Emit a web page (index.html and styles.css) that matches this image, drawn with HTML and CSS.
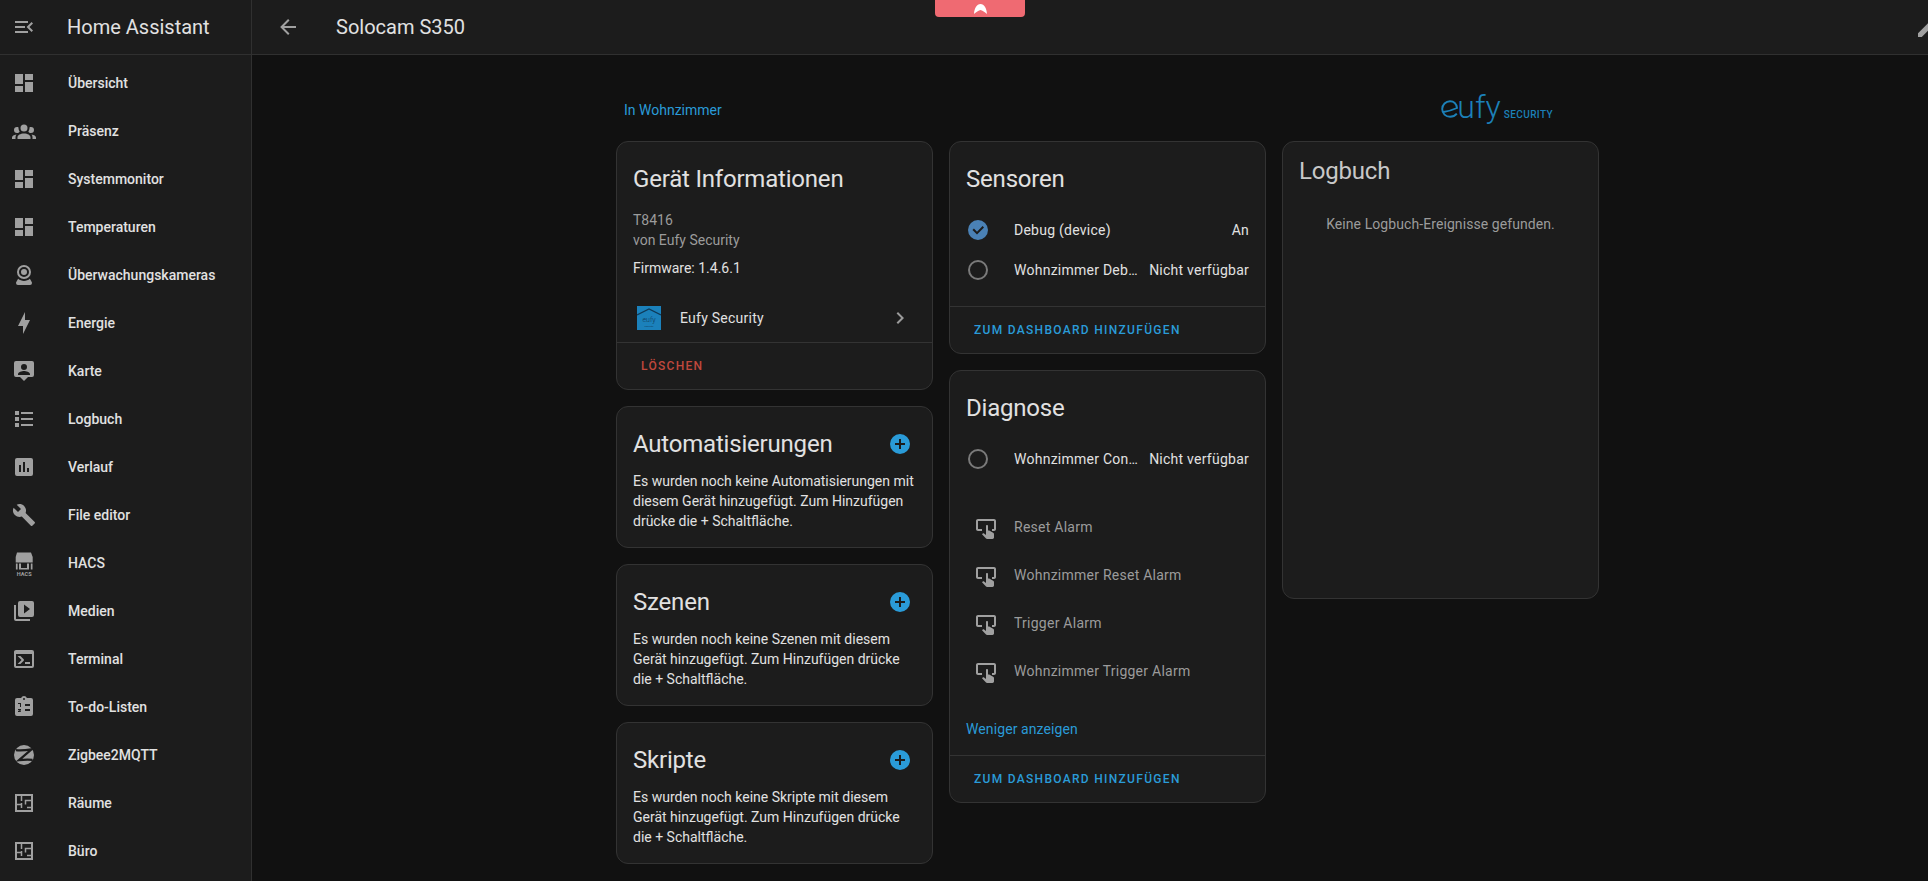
FILE: index.html
```html
<!DOCTYPE html>
<html lang="de">
<head>
<meta charset="utf-8">
<title>Solocam S350</title>
<link rel="stylesheet" href="styles.css">
</head>
<body>
<div class="app">
  <aside class="sidebar">
    <div class="side-head">
      <svg class="icon" viewBox="0 0 24 24"><path d="M21,15.61L19.59,17L14.58,12L19.59,7L21,8.39L17.44,12L21,15.61M3,6H16V8H3V6M3,13V11H13V13H3M3,18V16H16V18H3Z"/></svg>
      <span class="side-title">Home Assistant</span>
    </div>
    <nav class="nav">
      <a class="nav-item"><svg class="icon" viewBox="0 0 24 24"><path d="M13,3V9H21V3M13,21H21V11H13M3,21H11V15H3M3,13H11V3H3V13Z"/></svg><span>Übersicht</span></a>
      <a class="nav-item"><svg class="icon" viewBox="0 0 24 24"><path d="M12,5.5A3.5,3.5 0 0,1 15.5,9A3.5,3.5 0 0,1 12,12.5A3.5,3.5 0 0,1 8.5,9A3.5,3.5 0 0,1 12,5.5M5,8C5.56,8 6.08,8.15 6.53,8.42C6.38,9.85 6.8,11.27 7.66,12.38C7.16,13.34 6.16,14 5,14A3,3 0 0,1 2,11A3,3 0 0,1 5,8M19,8A3,3 0 0,1 22,11A3,3 0 0,1 19,14C17.84,14 16.84,13.34 16.34,12.38C17.2,11.27 17.62,9.85 17.47,8.42C17.92,8.15 18.44,8 19,8M5.5,18.25C5.5,16.18 8.41,14.5 12,14.5C15.59,14.5 18.5,16.18 18.5,18.25V20H5.5V18.25M0,20V18.5C0,17.11 1.89,15.94 4.45,15.6C3.86,16.28 3.5,17.22 3.5,18.25V20H0M24,20H20.5V18.25C20.5,17.22 20.14,16.28 19.55,15.6C22.11,15.94 24,17.11 24,18.5V20Z"/></svg><span>Präsenz</span></a>
      <a class="nav-item"><svg class="icon" viewBox="0 0 24 24"><path d="M13,3V9H21V3M13,21H21V11H13M3,21H11V15H3M3,13H11V3H3V13Z"/></svg><span>Systemmonitor</span></a>
      <a class="nav-item"><svg class="icon" viewBox="0 0 24 24"><path d="M13,3V9H21V3M13,21H21V11H13M3,21H11V15H3M3,13H11V3H3V13Z"/></svg><span>Temperaturen</span></a>
      <a class="nav-item"><svg class="icon" viewBox="0 0 24 24"><path d="M12,2A7,7 0 0,1 19,9A7,7 0 0,1 12,16A7,7 0 0,1 5,9A7,7 0 0,1 12,2M12,4A5,5 0 0,0 7,9A5,5 0 0,0 12,14A5,5 0 0,0 17,9A5,5 0 0,0 12,4M12,6A3,3 0 0,1 15,9A3,3 0 0,1 12,12A3,3 0 0,1 9,9A3,3 0 0,1 12,6M6,22A2,2 0 0,1 4,20C4,19.62 4.1,19.27 4.29,18.97L6.11,15.81C7.69,17.17 9.75,18 12,18C14.25,18 16.31,17.17 17.89,15.81L19.71,18.97C19.9,19.27 20,19.62 20,20A2,2 0 0,1 18,22H6Z"/></svg><span>Überwachungskameras</span></a>
      <a class="nav-item"><svg class="icon" viewBox="0 0 24 24"><path d="M11,15H6L13,1V9H18L11,23V15Z"/></svg><span>Energie</span></a>
      <a class="nav-item"><svg class="icon" viewBox="0 0 24 24"><path d="M4,2H20A2,2 0 0,1 22,4V16A2,2 0 0,1 20,18H16L12,22L8,18H4A2,2 0 0,1 2,16V4A2,2 0 0,1 4,2M12,5A3,3 0 0,0 9,8A3,3 0 0,0 12,11A3,3 0 0,0 15,8A3,3 0 0,0 12,5M6,16H18V15C18,13 14,11.9 12,11.9C10,11.9 6,13 6,15V16Z"/></svg><span>Karte</span></a>
      <a class="nav-item"><svg class="icon" viewBox="0 0 24 24"><path d="M3,4H7V8H3V4M9,5V7H21V5H9M3,10H7V14H3V10M9,11V13H21V11H9M3,16H7V20H3V16M9,17V19H21V17H9"/></svg><span>Logbuch</span></a>
      <a class="nav-item"><svg class="icon" viewBox="0 0 24 24"><path d="M5,3H19A2,2 0 0,1 21,5V19A2,2 0 0,1 19,21H5A2,2 0 0,1 3,19V5A2,2 0 0,1 5,3M7,17H9V10H7V17M11,17H13V7H11V17M15,17H17V13H15V17Z"/></svg><span>Verlauf</span></a>
      <a class="nav-item"><svg class="icon" viewBox="0 0 24 24"><path d="M22.7,19L13.6,9.9C14.5,7.6 14,4.9 12.1,3C10.1,1 7.1,0.6 4.7,1.7L9,6L6,9L1.6,4.7C0.4,7.1 0.9,10.1 2.9,12.1C4.8,14 7.5,14.5 9.8,13.6L18.9,22.7C19.3,23.1 19.9,23.1 20.3,22.7L22.6,20.4C23.1,20 23.1,19.3 22.7,19Z"/></svg><span>File editor</span></a>
      <a class="nav-item"><svg class="icon hacs" viewBox="0 0 24 24"><path d="M5,1.5H19L20.7,6V11.5H3.7V6ZM3.9,12.6H5.6V18.6H3.9ZM18.8,12.6H20.5V18.6H18.8ZM7,12.6H9V17H15V12.6H17V18.6H7Z"/><text class="hacs-mark" x="12.2" y="25" text-anchor="middle">HACS</text></svg><span>HACS</span></a>
      <a class="nav-item"><svg class="icon" viewBox="0 0 24 24"><path d="M4,6H2V20A2,2 0 0,0 4,22H18V20H4V6M20,2H8A2,2 0 0,0 6,4V16A2,2 0 0,0 8,18H20A2,2 0 0,0 22,16V4A2,2 0 0,0 20,2M12,14.5V5.5L18,10L12,14.5Z"/></svg><span>Medien</span></a>
      <a class="nav-item"><svg class="icon" viewBox="0 0 24 24"><path d="M20,19V7H4V19H20M20,3A2,2 0 0,1 22,5V19A2,2 0 0,1 20,21H4A2,2 0 0,1 2,19V5C2,3.89 2.9,3 4,3H20M13,17V15H18V17H13M9.58,13L5.57,9H8.4L11.7,12.3C12.09,12.69 12.09,13.33 11.7,13.72L8.42,17H5.59L9.58,13Z"/></svg><span>Terminal</span></a>
      <a class="nav-item"><svg class="icon" viewBox="0 0 24 24"><path fill-rule="evenodd" d="M19,3H14.82C14.4,1.84 13.3,1 12,1C10.7,1 9.6,1.84 9.18,3H5A2,2 0 0,0 3,5V19A2,2 0 0,0 5,21H19A2,2 0 0,0 21,19V5A2,2 0 0,0 19,3M12,3A1,1 0 0,1 13,4A1,1 0 0,1 12,5A1,1 0 0,1 11,4A1,1 0 0,1 12,3M13,9H18V11H13V9M13,14H18V16H13V14M6,8H9V12H8V9H6V8M6,14H9V15.2L7.6,16.2H9V17H6V16L8,15H6V14Z"/></svg><span>To-do-Listen</span></a>
      <a class="nav-item"><svg class="icon" viewBox="0 0 24 24"><circle cx="12" cy="12" r="10"/><path class="z-cut" d="M4,7.2C8,7.6 13,7.4 19.5,6.4L7,17.2C11,16.6 16,16.4 20.5,16.8"/></svg><span>Zigbee2MQTT</span></a>
      <a class="nav-item"><svg class="icon" viewBox="0 0 24 24"><path fill-rule="evenodd" d="M3,3H21V21H3V3ZM5,5V19H19V5Z"/><path class="walls" d="M9.5,5V10M5,13.5H10M9.5,12V17M19,9.5H13.5V13.5M15,16.5H19"/></svg><span>Räume</span></a>
      <a class="nav-item"><svg class="icon" viewBox="0 0 24 24"><path fill-rule="evenodd" d="M3,3H21V21H3V3ZM5,5V19H19V5Z"/><path class="walls" d="M9.5,5V10M5,13.5H10M9.5,12V17M19,9.5H13.5V13.5M15,16.5H19"/></svg><span>Büro</span></a>
    </nav>
  </aside>
  <main class="main">
    <header class="topbar">
      <svg class="icon back" viewBox="0 0 24 24"><path d="M20,11V13H8L13.5,18.5L12.08,19.92L4.16,12L12.08,4.08L13.5,5.5L8,11H20Z"/></svg>
      <span class="top-title">Solocam S350</span>
      <svg class="icon pencil" viewBox="0 0 24 24"><path d="M20.71,7.04C21.1,6.65 21.1,6 20.71,5.63L18.37,3.29C18,2.9 17.35,2.9 16.96,3.29L15.12,5.12L18.87,8.87M3,17.25V21H6.75L17.81,9.93L14.06,6.18L3,17.25Z"/></svg>
    </header>
    <div class="content">
      <div class="container">
        <div class="crumbs">
          <a class="link">In Wohnzimmer</a>
          <div class="brand"><svg class="brand-mark" viewBox="0 0 18 18"><path d="M2.5,12C6,11.4 12.5,9.6 16,8C15.4,3.8 12.5,1.2 9,1.2C4.8,1.2 1.2,4.6 1.2,9C1.2,13.6 4.8,16.8 9,16.8C11.6,16.8 14.2,15.6 15.8,13.6"/></svg><span class="brand-word">ufy</span><span class="brand-sub">SECURITY</span></div>
        </div>
        <div class="grid">
          <div class="col">
            <section class="card">
              <h2 class="card-title">Gerät Informationen</h2>
              <div class="info">
                <div class="muted">T8416</div>
                <div class="muted">von Eufy Security</div>
                <div class="firmware">Firmware: 1.4.6.1</div>
              </div>
              <div class="integration">
                <svg class="int-logo" viewBox="0 0 24 24"><rect width="24" height="24" fill="#1b81bb"/><path class="roof" d="M0,9L12,3L24,9"/><text class="logo-word" x="12" y="16" text-anchor="middle">eufy</text><text class="logo-sub" x="12" y="20.5" text-anchor="middle">security</text></svg>
                <span class="int-name">Eufy Security</span>
                <svg class="icon chev" viewBox="0 0 24 24"><path d="M8.59,16.58L13.17,12L8.59,7.41L10,6L16,12L10,18L8.59,16.58Z"/></svg>
              </div>
              <div class="actions"><span class="btn danger">LÖSCHEN</span></div>
            </section>
            <section class="card empty">
              <div class="title-row"><h2 class="card-title">Automatisierungen</h2><svg class="plus" viewBox="0 0 24 24"><path d="M17,13H13V17H11V13H7V11H11V7H13V11H17M12,2A10,10 0 0,0 2,12A10,10 0 0,0 12,22A10,10 0 0,0 22,12A10,10 0 0,0 12,2Z"/></svg></div>
              <p class="desc">Es wurden noch keine Automatisierungen mit diesem Gerät hinzugefügt. Zum Hinzufügen drücke die + Schaltfläche.</p>
            </section>
            <section class="card empty">
              <div class="title-row"><h2 class="card-title">Szenen</h2><svg class="plus" viewBox="0 0 24 24"><path d="M17,13H13V17H11V13H7V11H11V7H13V11H17M12,2A10,10 0 0,0 2,12A10,10 0 0,0 12,22A10,10 0 0,0 22,12A10,10 0 0,0 12,2Z"/></svg></div>
              <p class="desc">Es wurden noch keine Szenen mit diesem Gerät hinzugefügt. Zum Hinzufügen drücke die + Schaltfläche.</p>
            </section>
            <section class="card empty">
              <div class="title-row"><h2 class="card-title">Skripte</h2><svg class="plus" viewBox="0 0 24 24"><path d="M17,13H13V17H11V13H7V11H11V7H13V11H17M12,2A10,10 0 0,0 2,12A10,10 0 0,0 12,22A10,10 0 0,0 22,12A10,10 0 0,0 12,2Z"/></svg></div>
              <p class="desc">Es wurden noch keine Skripte mit diesem Gerät hinzugefügt. Zum Hinzufügen drücke die + Schaltfläche.</p>
            </section>
          </div>
          <div class="col">
            <section class="card">
              <h2 class="card-title">Sensoren</h2>
              <div class="rows sensors">
                <div class="row"><span class="badge"><svg class="state on" viewBox="0 0 24 24"><path d="M12,2A10,10 0 0,1 22,12A10,10 0 0,1 12,22A10,10 0 0,1 2,12A10,10 0 0,1 12,2M11,16.5L18,9.5L16.59,8.09L11,13.67L7.91,10.59L6.5,12L11,16.5Z"/></svg></span><span class="row-name">Debug (device)</span><span class="row-val">An</span></div>
                <div class="row"><span class="badge"><svg class="state off" viewBox="0 0 24 24"><path d="M12,20A8,8 0 0,1 4,12A8,8 0 0,1 12,4A8,8 0 0,1 20,12A8,8 0 0,1 12,20M12,2A10,10 0 0,0 2,12A10,10 0 0,0 12,22A10,10 0 0,0 22,12A10,10 0 0,0 12,2Z"/></svg></span><span class="row-name">Wohnzimmer Debug (device)</span><span class="row-val">Nicht verfügbar</span></div>
              </div>
              <div class="actions"><span class="btn">ZUM DASHBOARD HINZUFÜGEN</span></div>
            </section>
            <section class="card">
              <h2 class="card-title">Diagnose</h2>
              <div class="rows">
                <div class="row"><span class="badge"><svg class="state off" viewBox="0 0 24 24"><path d="M12,20A8,8 0 0,1 4,12A8,8 0 0,1 12,4A8,8 0 0,1 20,12A8,8 0 0,1 12,20M12,2A10,10 0 0,0 2,12A10,10 0 0,0 12,22A10,10 0 0,0 22,12A10,10 0 0,0 12,2Z"/></svg></span><span class="row-name">Wohnzimmer Connectivity</span><span class="row-val">Nicht verfügbar</span></div>
              </div>
              <div class="rows press">
                <div class="row tall"><span class="badge"><svg class="state press-i" viewBox="0 0 24 24"><path d="M20 2H4C2.9 2 2 2.9 2 4V12C2 13.11 2.9 14 4 14H8V12H4V4H20V12H18V14H20V13.96L20.04 14C21.13 14 22 13.09 22 12V4C22 2.9 21.11 2 20 2M20 20.5C19.97 21.32 19.32 21.97 18.5 22H13C12.62 22 12.26 21.85 12 21.57L8 17.37L8.74 16.6C8.93 16.39 9.2 16.28 9.5 16.28H9.7L12 18V9C12 8.45 12.45 8 13 8S14 8.45 14 9V13.47L15.21 13.6L19.15 15.79C19.68 16.03 20 16.56 20 17.14V20.5Z"/></svg></span><span class="row-name dim">Reset Alarm</span></div>
                <div class="row tall"><span class="badge"><svg class="state press-i" viewBox="0 0 24 24"><path d="M20 2H4C2.9 2 2 2.9 2 4V12C2 13.11 2.9 14 4 14H8V12H4V4H20V12H18V14H20V13.96L20.04 14C21.13 14 22 13.09 22 12V4C22 2.9 21.11 2 20 2M20 20.5C19.97 21.32 19.32 21.97 18.5 22H13C12.62 22 12.26 21.85 12 21.57L8 17.37L8.74 16.6C8.93 16.39 9.2 16.28 9.5 16.28H9.7L12 18V9C12 8.45 12.45 8 13 8S14 8.45 14 9V13.47L15.21 13.6L19.15 15.79C19.68 16.03 20 16.56 20 17.14V20.5Z"/></svg></span><span class="row-name dim">Wohnzimmer Reset Alarm</span></div>
                <div class="row tall"><span class="badge"><svg class="state press-i" viewBox="0 0 24 24"><path d="M20 2H4C2.9 2 2 2.9 2 4V12C2 13.11 2.9 14 4 14H8V12H4V4H20V12H18V14H20V13.96L20.04 14C21.13 14 22 13.09 22 12V4C22 2.9 21.11 2 20 2M20 20.5C19.97 21.32 19.32 21.97 18.5 22H13C12.62 22 12.26 21.85 12 21.57L8 17.37L8.74 16.6C8.93 16.39 9.2 16.28 9.5 16.28H9.7L12 18V9C12 8.45 12.45 8 13 8S14 8.45 14 9V13.47L15.21 13.6L19.15 15.79C19.68 16.03 20 16.56 20 17.14V20.5Z"/></svg></span><span class="row-name dim">Trigger Alarm</span></div>
                <div class="row tall"><span class="badge"><svg class="state press-i" viewBox="0 0 24 24"><path d="M20 2H4C2.9 2 2 2.9 2 4V12C2 13.11 2.9 14 4 14H8V12H4V4H20V12H18V14H20V13.96L20.04 14C21.13 14 22 13.09 22 12V4C22 2.9 21.11 2 20 2M20 20.5C19.97 21.32 19.32 21.97 18.5 22H13C12.62 22 12.26 21.85 12 21.57L8 17.37L8.74 16.6C8.93 16.39 9.2 16.28 9.5 16.28H9.7L12 18V9C12 8.45 12.45 8 13 8S14 8.45 14 9V13.47L15.21 13.6L19.15 15.79C19.68 16.03 20 16.56 20 17.14V20.5Z"/></svg></span><span class="row-name dim">Wohnzimmer Trigger Alarm</span></div>
              </div>
              <a class="link less">Weniger anzeigen</a>
              <div class="actions"><span class="btn">ZUM DASHBOARD HINZUFÜGEN</span></div>
            </section>
          </div>
          <div class="col">
            <section class="card logbook">
              <h2 class="log-title">Logbuch</h2>
              <p class="log-empty">Keine Logbuch-Ereignisse gefunden.</p>
            </section>
          </div>
        </div>
      </div>
    </div>
  </main>
  <div class="tab"><svg class="tab-icon" viewBox="0 0 16 12"><path d="M1,12C1,6 4,1 8,1C12,1 15,6 15,12C13,10 11,8.5 8,7.5C5,8.5 3,10 1,12Z"/></svg></div>
</div>
</body>
</html>
```
FILE: styles.css
```css
* { box-sizing: border-box; }
html, body { margin: 0; height: 100%; overflow: hidden; background: #111; }
body { font-family: Roboto, "Liberation Sans", sans-serif; color: #e1e1e1; font-size: 14px; }
.app { position: relative; display: flex; width: 1964px; height: 881px; overflow: hidden; background: #111; }
.icon { width: 24px; height: 24px; fill: #a0a0a0; flex: none; display: block; }

.sidebar { width: 252px; flex: none; background: #1c1c1c; border-right: 1px solid #303030; height: 100%; }
.side-head { height: 55px; display: flex; align-items: center; padding-left: 12px; border-bottom: 1px solid #303030; }
.side-title { margin-left: 31px; font-size: 20px; color: #e1e1e1; }
.nav { padding-top: 4px; }
.nav-item { display: flex; align-items: center; height: 48px; padding-left: 12px; font-weight: 500; color: #e1e1e1; font-size: 14px; }
.nav-item span { margin-left: 32px; }
.hacs { overflow: visible; }
.hacs-mark { font: 700 5.6px Roboto, sans-serif; fill: #a0a0a0; }
.z-cut { fill: none; stroke: #1c1c1c; stroke-width: 2.2; }
.walls { fill: none; stroke: #a0a0a0; stroke-width: 1.5; }

.main { flex: 1; min-width: 0; display: flex; flex-direction: column; }
.topbar { height: 55px; flex: none; display: flex; align-items: center; background: #1c1c1c; border-bottom: 1px solid #303030; padding: 0 25px 0 0; }
.back { margin-left: 24px; }
.top-title { margin-left: 36px; font-size: 20px; color: #e1e1e1; flex: 1; }
.pencil { margin-bottom: -1px; }

.content { flex: 1; padding: 31px 0 0 364px; }
.container { width: 983px; }
.crumbs { display: flex; justify-content: space-between; align-items: center; height: 55px; padding: 0 46px 8px 8px; }
.link { color: #2a9bd8; font-size: 14px; }
.brand { display: flex; align-items: baseline; color: #1c80b8; line-height: 32px; margin: 6px 0 4px; }
.brand-mark { width: 18px; height: 18px; fill: none; stroke: #1c80b8; stroke-width: 1.9; }
.brand-word { font-size: 32px; font-weight: 300; margin-left: -2px; }
.brand-sub { font-size: 10px; font-weight: 500; margin-left: 3px; letter-spacing: .4px; }

.grid { display: grid; grid-template-columns: repeat(3, minmax(0, 1fr)); gap: 16px; align-items: start; }
.col { display: flex; flex-direction: column; gap: 16px; min-width: 0; }
.card { background: #1c1c1c; border: 1px solid #333; border-radius: 12px; display: flex; flex-direction: column; }
.card-title { margin: 0; font-size: 24px; font-weight: 400; line-height: 32px; letter-spacing: -.2px; color: #e1e1e1; padding: 21px 16px 0; }

.info { padding: 15px 16px 0; line-height: 20px; }
.muted { color: #9b9b9b; }
.firmware { margin-top: 8px; color: #e1e1e1; }
.integration { display: flex; align-items: center; height: 48px; margin-top: 16px; padding: 0 20px; }
.int-logo { width: 24px; height: 24px; flex: none; }
.roof { fill: none; stroke: #0f3a58; stroke-width: 1.3; }
.logo-word { font: 300 7px Roboto, sans-serif; fill: #0f3a58; }
.logo-sub { font: 400 2.5px Roboto, sans-serif; fill: #0f3a58; }
.int-name { margin-left: 19px; flex: 1; letter-spacing: .25px; }
.chev { fill: #9b9b9b; }
.actions { border-top: 1px solid #333; height: 47px; display: flex; align-items: center; padding-left: 24px; }
.btn { font-size: 12px; font-weight: 500; letter-spacing: 1.3px; color: #2a9bd8; }
.btn.danger { color: #c0483d; }

.title-row { display: flex; justify-content: space-between; align-items: center; padding-right: 20px; }
.plus { width: 24px; height: 24px; fill: #2a9bd8; margin-top: 20px; }
.desc { margin: 0; padding: 11px 16px 16px; line-height: 20px; }

.rows { padding: 15px 16px 0; }
.rows.sensors { padding-bottom: 16px; }
.row { display: flex; align-items: center; height: 40px; letter-spacing: .25px; }
.row.tall { height: 48px; }
.badge { width: 24px; flex: none; }
.state { display: block; width: 24px; height: 24px; }
.state.on { fill: #4a81b5; }
.state.off { fill: #7a7a7a; }
.state.press-i { fill: #a0a0a0; margin: 3px 0 0 8px; }
.row-name { margin-left: 24px; flex: 1; min-width: 0; white-space: nowrap; overflow: hidden; text-overflow: ellipsis; }
.row-name.dim { color: #9b9b9b; }
.row-val { margin-left: 8px; flex: none; }
.press { padding-top: 24px; }
.less { padding: 24px 16px 16px; line-height: 20px; letter-spacing: .1px; }

.log-title { margin: 0; font-size: 24px; font-weight: 400; line-height: 32px; letter-spacing: -.2px; color: #c8c8c8; padding: 13px 16px 0; }
.logbook { height: 458px; }
.log-empty { margin: 0; padding: 27px 16px 0; text-align: center; color: #9b9b9b; line-height: 20px; letter-spacing: .08px; }

.tab { position: absolute; left: 935px; top: 0; width: 90px; height: 17px; background: #ef6a72; border-radius: 0 0 4px 4px; display: flex; justify-content: center; align-items: flex-start; padding-top: 3px; }
.tab-icon { width: 15px; height: 11px; fill: #fff; }
```
